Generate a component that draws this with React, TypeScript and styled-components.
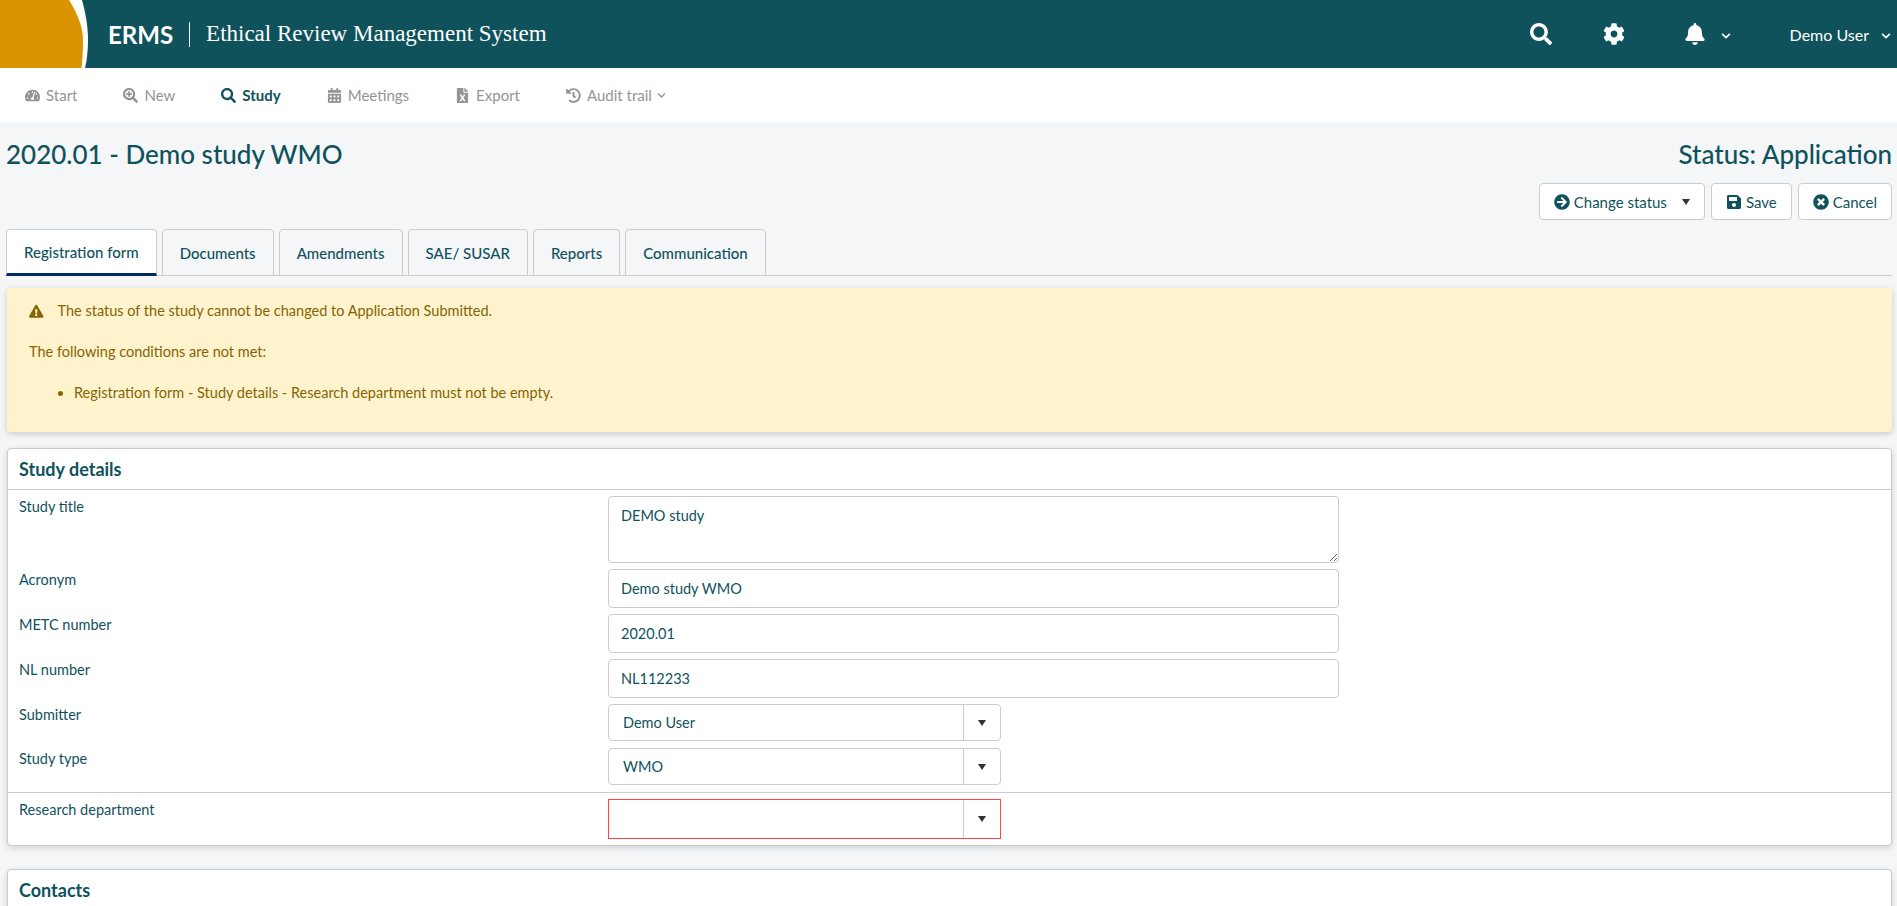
import { createGlobalStyle, styled } from "styled-components";
import {
  FaArrowCircleRight,
  FaBell,
  FaCalendarAlt,
  FaChevronDown,
  FaCog,
  FaExclamationTriangle,
  FaFileExcel,
  FaHistory,
  FaSave,
  FaSearch,
  FaSearchPlus,
  FaTachometerAlt,
  FaTimesCircle,
} from "react-icons/fa";

const teal = "#0f525c";

const GlobalStyle = createGlobalStyle`
  html, body {
    margin: 0;
    height: 906px;
    overflow: hidden;
    background: #f4f6f8;
    font-family: Lato, "Noto Sans", sans-serif;
    color: ${teal};
  }
  * { box-sizing: border-box; }
`;

const Header = styled.header`
  display: flex;
  align-items: center;
  height: 68px;
  background: ${teal};
  color: white;
`;

const Logo = styled.svg`
  flex: none;
  width: 108px;
  height: 68px;
`;

const Brand = styled.span`
  font-size: 24px;
  font-weight: 700;
`;

const BrandDivider = styled.span`
  width: 1px;
  height: 25px;
  margin: 0 16px;
  background: white;
`;

const BrandTitle = styled.span`
  font-family: "Liberation Serif", serif;
  font-size: 23px;
`;

const HeaderRight = styled.div`
  display: flex;
  align-items: center;
  margin-left: auto;
  padding-right: 6px;
`;

const HeaderIcon = styled.span<{ $gap: number }>`
  display: flex;
  margin-right: ${(p) => p.$gap}px;
  font-size: 22px;
`;

const Caret = styled(FaChevronDown)<{ $gap: number }>`
  margin: 4px ${(p) => p.$gap}px 0 0;
  font-size: 10px;
`;

const UserName = styled.span`
  margin-right: 12px;
  font-size: 16px;
`;

const Nav = styled.nav`
  display: flex;
  gap: 46px;
  align-items: center;
  height: 54px;
  padding-left: 25px;
  background: white;
`;

const NavItem = styled.a<{ $active?: boolean }>`
  display: flex;
  gap: 6px;
  align-items: center;
  font-size: 15px;
  font-weight: ${(p) => (p.$active ? 700 : 400)};
  color: ${(p) => (p.$active ? teal : "#949494")};
  svg {
    font-size: 15px;
  }
`;

const NavCaret = styled(FaChevronDown)`
  margin-left: -1px;
  font-size: 9px !important;
`;

const Main = styled.main`
  padding: 0 5px 0 6px;
`;

const TitleRow = styled.div`
  display: flex;
  justify-content: space-between;
  align-items: center;
  height: 61px;
  padding-top: 2px;
`;

const PageTitle = styled.h1`
  margin: 0;
  font-size: 26px;
  font-weight: 500;
`;

const Status = styled.h2`
  margin: 0;
  font-size: 26px;
  font-weight: 500;
`;

const Actions = styled.div`
  display: flex;
  gap: 6px;
  justify-content: flex-end;
`;

const ActionButton = styled.button`
  display: flex;
  gap: 4px;
  align-items: center;
  height: 37px;
  padding: 0 14px;
  background: white;
  border: 1px solid #ccc;
  border-radius: 4px;
  font-family: inherit;
  font-size: 15px;
  color: ${teal};
  svg {
    font-size: 16px;
  }
`;

const ButtonArrow = styled.span`
  width: 0;
  height: 0;
  margin-left: 11px;
  border-top: 6px solid #333;
  border-left: 4px solid transparent;
  border-right: 4px solid transparent;
`;

const Tabs = styled.div`
  display: flex;
  gap: 5px;
  height: 47px;
  margin-top: 9px;
  border-bottom: 1px solid #ccc;
`;

const Tab = styled.div<{ $active?: boolean }>`
  display: flex;
  align-items: center;
  height: 47px;
  padding: 0 17px;
  background: ${(p) => (p.$active ? "white" : "transparent")};
  border: 1px solid #ccc;
  border-bottom: ${(p) => (p.$active ? "3px solid #002b5c" : "1px solid #ccc")};
  border-radius: 4px 4px 0 0;
  font-size: 15px;
  font-weight: 500;
`;

const Alert = styled.div`
  margin: 12px 0 16px 1px;
  height: 144px;
  padding: 14px 22px;
  background: #fff3cd;
  border-radius: 4px;
  box-shadow: 0 2px 6px rgba(0, 0, 0, 0.18);
  font-size: 14.5px;
  color: #856404;
`;

const AlertLine = styled.p`
  display: flex;
  align-items: center;
  gap: 14px;
  margin: 0 0 23px;
  line-height: 18px;
`;

const AlertList = styled.ul`
  margin: 0;
  padding-left: 45px;
  line-height: 18px;
`;

const Card = styled.section`
  margin: 0 0 23px 1px;
  background: white;
  border: 1px solid #ccc;
  border-radius: 4px;
  box-shadow: 0 2px 6px rgba(0, 0, 0, 0.15);
`;

const CardTitle = styled.h3`
  margin: 0;
  height: 41px;
  padding: 0 11px;
  border-bottom: 1px solid #ccc;
  font-size: 18px;
  font-weight: 700;
  line-height: 40px;
`;

const Row = styled.div<{ $divided?: boolean }>`
  display: grid;
  grid-template-columns: 600px 731px;
  padding: 6px 0 0;
  ${(p) => p.$divided && "margin-top: 6px; border-top: 1px solid #ccc;"}
`;

const Label = styled.label`
  padding: 2px 0 0 11px;
  font-size: 14.5px;
`;

const TextInput = styled.input`
  width: 100%;
  height: 39px;
  padding: 0 12px;
  border: 1px solid #ccc;
  border-radius: 4px;
  font-family: inherit;
  font-size: 14.5px;
  color: ${teal};
`;

const TextBox = styled.textarea`
  display: block;
  width: 100%;
  height: 67px;
  padding: 10px 12px;
  border: 1px solid #ccc;
  border-radius: 4px;
  font-family: inherit;
  font-size: 14.5px;
  color: ${teal};
`;

const Select = styled.div<{ $invalid?: boolean }>`
  display: flex;
  align-items: center;
  width: 393px;
  height: ${(p) => (p.$invalid ? 40 : 37)}px;
  margin-bottom: ${(p) => (p.$invalid ? 6 : 1)}px;
  padding-left: 14px;
  border: 1px solid ${(p) => (p.$invalid ? "#f44" : "#ccc")};
  border-radius: ${(p) => (p.$invalid ? 0 : 4)}px;
  font-size: 14.5px;
`;

const SelectValue = styled.span`
  flex: 1;
`;

const SelectButton = styled.span`
  display: flex;
  justify-content: center;
  align-items: center;
  width: 37px;
  height: 100%;
  border-left: 1px solid #ccc;
  &::after {
    content: "";
    border-top: 6px solid #333;
    border-left: 4px solid transparent;
    border-right: 4px solid transparent;
  }
`;

export default function App() {
  return (
    <>
      <GlobalStyle />
      <Header>
        <Logo viewBox="0 0 108 68">
          <path d="M69 0H82C86 14 88 28 88 40C88 50 87 60 85 68H81L69 0Z" fill="white" />
          <path d="M0 0H69C78 14 83 28 83 40C83 50 82.5 60 81.5 68H0Z" fill="#d99400" />
        </Logo>
        <Brand>ERMS</Brand>
        <BrandDivider />
        <BrandTitle>Ethical Review Management System</BrandTitle>
        <HeaderRight>
          <HeaderIcon $gap={51}><FaSearch /></HeaderIcon>
          <HeaderIcon $gap={59}><FaCog /></HeaderIcon>
          <HeaderIcon $gap={15}><FaBell /></HeaderIcon>
          <Caret $gap={59} />
          <UserName>Demo User</UserName>
          <Caret $gap={0} />
        </HeaderRight>
      </Header>
      <Nav>
        <NavItem><FaTachometerAlt />Start</NavItem>
        <NavItem><FaSearchPlus />New</NavItem>
        <NavItem $active><FaSearch />Study</NavItem>
        <NavItem><FaCalendarAlt />Meetings</NavItem>
        <NavItem><FaFileExcel />Export</NavItem>
        <NavItem><FaHistory />Audit trail<NavCaret /></NavItem>
      </Nav>
      <Main>
        <TitleRow>
          <PageTitle>2020.01 - Demo study WMO</PageTitle>
          <Status>Status: Application</Status>
        </TitleRow>
        <Actions>
          <ActionButton><FaArrowCircleRight />Change status<ButtonArrow /></ActionButton>
          <ActionButton><FaSave />Save</ActionButton>
          <ActionButton><FaTimesCircle />Cancel</ActionButton>
        </Actions>
        <Tabs>
          <Tab $active>Registration form</Tab>
          <Tab>Documents</Tab>
          <Tab>Amendments</Tab>
          <Tab>SAE/ SUSAR</Tab>
          <Tab>Reports</Tab>
          <Tab>Communication</Tab>
        </Tabs>
        <Alert>
          <AlertLine><FaExclamationTriangle />The status of the study cannot be changed to Application Submitted.</AlertLine>
          <AlertLine>The following conditions are not met:</AlertLine>
          <AlertList>
            <li>Registration form - Study details - Research department must not be empty.</li>
          </AlertList>
        </Alert>
        <Card>
          <CardTitle>Study details</CardTitle>
          <Row>
            <Label>Study title</Label>
            <TextBox readOnly value="DEMO study" />
          </Row>
          <Row>
            <Label>Acronym</Label>
            <TextInput readOnly value="Demo study WMO" />
          </Row>
          <Row>
            <Label>METC number</Label>
            <TextInput readOnly value="2020.01" />
          </Row>
          <Row>
            <Label>NL number</Label>
            <TextInput readOnly value="NL112233" />
          </Row>
          <Row>
            <Label>Submitter</Label>
            <Select><SelectValue>Demo User</SelectValue><SelectButton /></Select>
          </Row>
          <Row>
            <Label>Study type</Label>
            <Select><SelectValue>WMO</SelectValue><SelectButton /></Select>
          </Row>
          <Row $divided>
            <Label>Research department</Label>
            <Select $invalid><SelectValue /><SelectButton /></Select>
          </Row>
        </Card>
        <Card>
          <CardTitle>Contacts</CardTitle>
        </Card>
      </Main>
    </>
  );
}
